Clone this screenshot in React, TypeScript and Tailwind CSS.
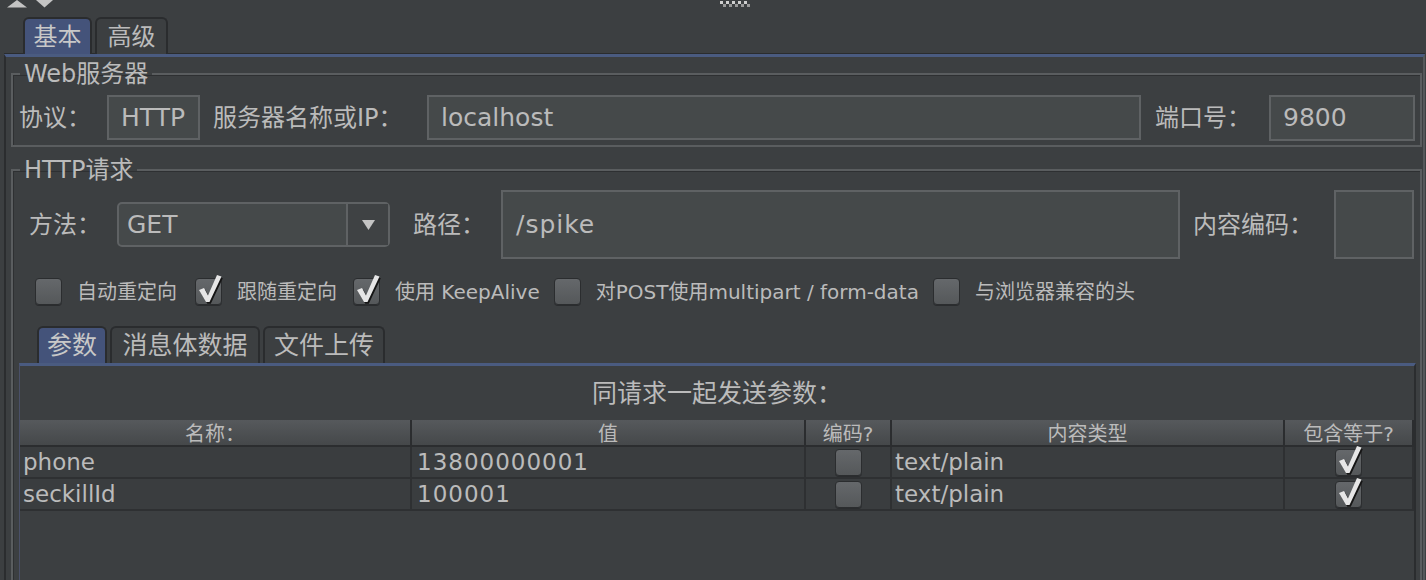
import React from 'react'

const font = "font-['DejaVu_Sans','Noto_Sans_CJK_SC',sans-serif]"

const checkPath = 'M3 11 L8 9 L12 16.5 L21 -4 L25.5 -2.5 L13.5 23 L10 23 Z'

function Check({ checked }: { checked?: boolean }) {
  return (
    <span className="relative inline-block h-[27px] w-[27px] shrink-0 rounded-[4px] border border-[#2b2d2f] bg-gradient-to-b from-[#65686b] to-[#55585a] shadow-[0_1px_0_#2a2c2e]">
      {checked && (
        <svg className="absolute left-0 top-[-6px]" width="28" height="34" viewBox="0 -6 28 34">
          <path d={checkPath} fill="#151515" transform="translate(1.3 1.8)" />
          <path d={checkPath} fill="#e6e6e6" />
        </svg>
      )}
    </span>
  )
}

function Field({ value, className }: { value: string; className: string }) {
  return (
    <div className={`flex items-center border-2 border-[#5f6264] bg-[#45494a] pl-[12px] text-[25px] text-[#bbbbbb] ${className}`}>
      {value}
    </div>
  )
}

function Tab({ label, active, className }: { label: string; active?: boolean; className: string }) {
  return (
    <div
      className={`flex h-[37px] items-center justify-center rounded-t-[6px] border-2 border-b-0 border-[#2a2c2e] text-[24px] ${
        active ? 'bg-[#44537a] text-[#c8c8c8]' : 'bg-[#3c3f41] text-[#bbbbbb]'
      } ${className}`}
    >
      {label}
    </div>
  )
}

function Option({ label, checked, className = '' }: { label: string; checked?: boolean; className?: string }) {
  return (
    <div className={`flex items-center ${className}`}>
      <Check checked={checked} />
      <span className="ml-[15px] text-[20px] leading-none">{label}</span>
    </div>
  )
}

const rows = [
  { name: 'phone', value: '13800000001' },
  { name: 'seckillId', value: '100001' },
]

export default function App() {
  return (
    <div className={`h-[580px] w-[1426px] overflow-hidden bg-[#3c3f41] text-[#bbbbbb] ${font}`}>
      {/* top strip: collapse arrows + splitter grip */}
      <div className="flex h-[17px] items-start">
        <svg className="ml-[7px]" width="47" height="8" viewBox="0 0 47 8">
          <path d="M0 7.5 L10 0 L20 7.5 Z" fill="#c4c4c4" />
          <path d="M29 0 L46 0 L37.5 7.5 Z" fill="#c4c4c4" />
        </svg>
        <svg className="ml-[666px] mt-[1px]" width="30" height="6" viewBox="0 0 30 6">
          {[0, 6, 12, 18, 24].map((x) => (
            <g key={x}>
              <rect x={x} y="0" width="3" height="3" fill="#d0d0d0" />
              <rect x={x + 3} y="3" width="3" height="3" fill="#9a9a9a" />
            </g>
          ))}
        </svg>
      </div>

      {/* main tabs */}
      <div className="flex h-[37px] items-end pl-[23px]">
        <Tab label="基本" active className="w-[69px]" />
        <Tab label="高级" className="ml-[3px] h-[35px] w-[73px]" />
      </div>

      {/* main pane */}
      <div className="ml-[4px] w-[1421px] border-x-2 border-t-[3px] border-l-[#2b2d2f] border-r-[#55585a] border-t-[#4a5b80] shadow-[0_-1px_0_#2a2c2e]">
        <fieldset className="ml-[5px] mr-[1px] mt-[2px] border-2 border-[#5a5d5f] pb-[5px] pr-[5px] shadow-[inset_1px_1px_0_#2e3032]">
          <legend className="ml-[7px] px-[4px] text-[24px] leading-[30px]">Web服务器</legend>
          <div className="mt-[6px] flex h-[45px] items-center pl-[6px]">
            <span className="w-[88px] text-[24px]">协议：</span>
            <Field value="HTTP" className="h-[45px] w-[93px]" />
            <span className="ml-[13px] w-[214px] text-[24px]">服务器名称或IP：</span>
            <Field value="localhost" className="h-[45px] flex-1" />
            <span className="ml-[14px] w-[114px] text-[24px]">端口号：</span>
            <Field value="9800" className="h-[46px] w-[146px]" />
          </div>
        </fieldset>

        <fieldset className="ml-[5px] mr-[1px] mt-[8px] h-[440px] border-2 border-[#5a5d5f] pr-[6px] shadow-[inset_1px_1px_0_#2e3032]">
          <legend className="ml-[7px] px-[4px] text-[24px] leading-[30px]">HTTP请求</legend>
          <div className="mt-[5px] flex h-[69px] items-center pl-[16px]">
            <span className="w-[88px] text-[24px]">方法：</span>
            <div className="flex h-[45px] w-[273px] items-stretch rounded-[5px] border-2 border-[#5f6264] bg-[#45494a]">
              <span className="flex flex-1 items-center pl-[8px] text-[25px]">GET</span>
              <span className="flex w-[42px] items-center justify-center border-l-2 border-[#5f6264] bg-[#3f4244]">
                <svg width="13" height="10" viewBox="0 0 13 10">
                  <path d="M0 0 L13 0 L6.5 10 Z" fill="#c4c4c4" />
                </svg>
              </span>
            </div>
            <span className="ml-[23px] w-[88px] text-[24px]">路径：</span>
            <Field value="/spike" className="h-[69px] flex-1 pl-[13px] tracking-[1px]" />
            <span className="ml-[13px] w-[141px] text-[24px]">内容编码：</span>
            <Field value="" className="h-[69px] w-[80px]" />
          </div>

          <div className="mt-[19px] flex h-[27px] items-center pl-[22px]">
            <Option label="自动重定向" />
            <Option label="跟随重定向" checked className="ml-[18px]" />
            <Option label="使用 KeepAlive" checked className="ml-[16px]" />
            <Option label="对POST使用multipart / form-data" className="ml-[14px]" />
            <Option label="与浏览器兼容的头" className="ml-[14px]" />
          </div>

          <div className="mt-[21px] flex pl-[24px]">
            <Tab label="参数" active className="w-[70px] text-[25px]" />
            <Tab label="消息体数据" className="ml-[3px] w-[150px] text-[25px]" />
            <Tab label="文件上传" className="ml-[3px] w-[122px] text-[25px]" />
          </div>

          <div className="ml-[6px] mr-[-2px] h-[260px] border-l border-r-2 border-t-[3px] border-l-[#4a5068] border-r-[#2b2d2f] border-t-[#4a5b80]">
            <div className="flex h-[54px] items-center justify-center pt-[1px] text-[25px]">同请求一起发送参数：</div>
            <div className="grid grid-cols-[392px_394px_86px_393px_1fr]">
              {['名称：', '值', '编码?', '内容类型', '包含等于?'].map((h) => (
                <div
                  key={h}
                  className="flex h-[27px] items-center justify-center border-b-2 border-r-2 border-[#2b2d2f] bg-gradient-to-b from-[#56595c] to-[#45484a] pt-[2px] text-[20px]"
                >
                  {h}
                </div>
              ))}
              {rows.map((r) => (
                <React.Fragment key={r.name}>
                  <div className="flex h-[32px] items-center border-b-2 border-r-2 border-[#2e3032] bg-[#3a3d3f] pl-[3px] text-[23px]">{r.name}</div>
                  <div className="flex h-[32px] items-center border-b-2 border-r-2 border-[#2e3032] bg-[#3a3d3f] pl-[5px] text-[23px] tracking-[1px]">{r.value}</div>
                  <div className="flex h-[32px] items-center justify-center border-b-2 border-r-2 border-[#2e3032] bg-[#3a3d3f]">
                    <Check />
                  </div>
                  <div className="flex h-[32px] items-center border-b-2 border-r-2 border-[#2e3032] bg-[#3a3d3f] pl-[3px] text-[23px]">text/plain</div>
                  <div className="flex h-[32px] items-center justify-center border-b-2 border-r-2 border-[#2e3032] bg-[#3a3d3f]">
                    <Check checked />
                  </div>
                </React.Fragment>
              ))}
            </div>
          </div>
        </fieldset>
      </div>
    </div>
  )
}
